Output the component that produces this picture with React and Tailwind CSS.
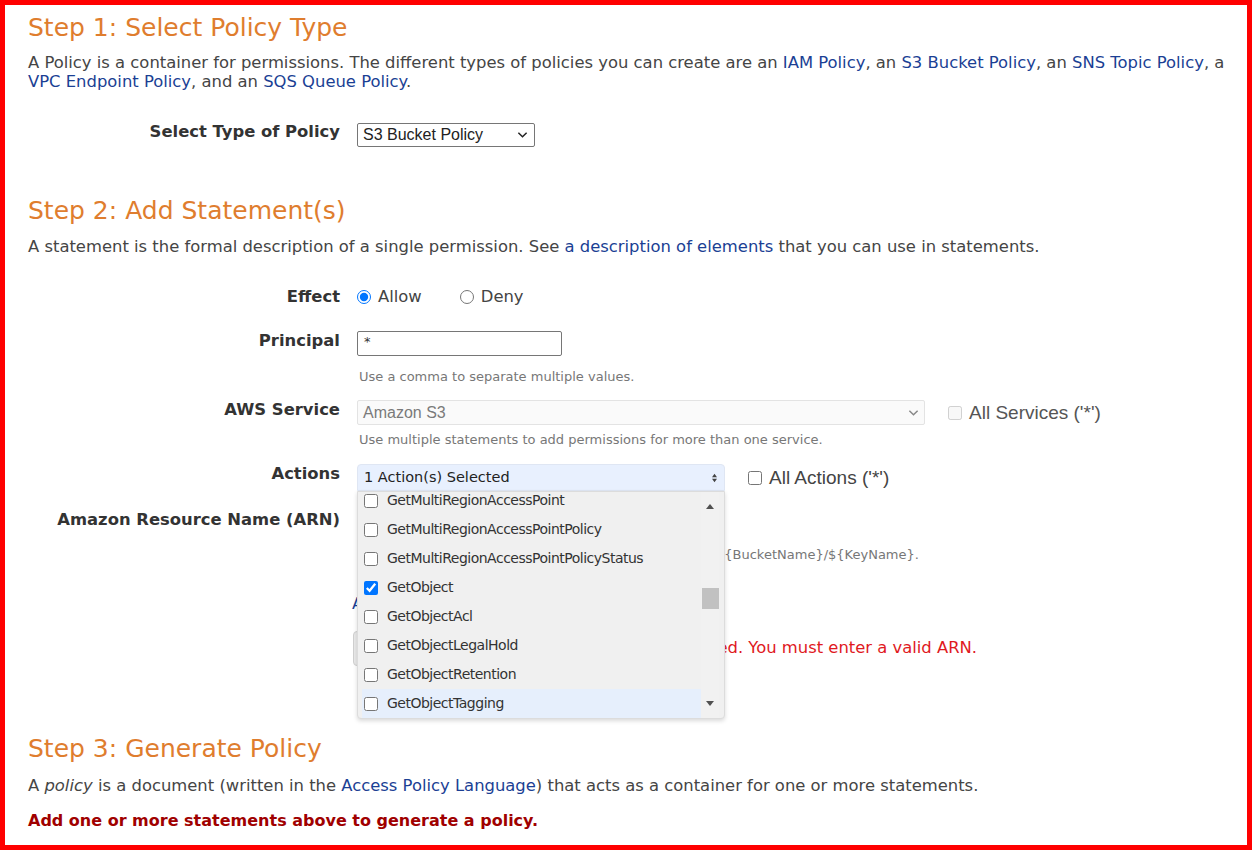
import React from "react";

const Chevron = ({ className }) => (
  <svg viewBox="0 0 12 8" className={className} fill="none" stroke="currentColor" strokeWidth="1.6">
    <path d="M1.5 1.5 L6 6 L10.5 1.5" />
  </svg>
);

const Row = ({ label, children, className = "" }) => (
  <div className={"flex items-start " + className}>
    <div className="w-[312px] shrink-0 text-right font-bold text-[16.4px] leading-[20px] text-[#333]">{label}</div>
    <div className="ml-[17px]">{children}</div>
  </div>
);

const actions = [
  { name: "GetMultiRegionAccessPoint" },
  { name: "GetMultiRegionAccessPointPolicy" },
  { name: "GetMultiRegionAccessPointPolicyStatus" },
  { name: "GetObject", checked: true },
  { name: "GetObjectAcl" },
  { name: "GetObjectLegalHold" },
  { name: "GetObjectRetention" },
  { name: "GetObjectTagging", hover: true },
];

const Link = ({ children }) => <span className="text-[#1b3f94]">{children}</span>;

const App = () => {
  return (
    <div className="w-[1252px] h-[850px] border-[5px] border-[#ff0000] bg-white overflow-hidden font-['DejaVu_Sans',sans-serif] text-[#454545]">
      <div className="pl-[23px] pr-[20px]">
        {/* Step 1 */}
        <h1 className="mt-[8px] text-[25px] leading-[30px] text-[#df7d2e]">Step 1: Select Policy Type</h1>
        <p className="mt-[10px] text-[16.4px] leading-[19px]">
          A Policy is a container for permissions. The different types of policies you can create are an{" "}
          <Link>IAM Policy</Link>, an <Link>S3 Bucket Policy</Link>, an <Link>SNS Topic Policy</Link>, a{" "}
          <Link>VPC Endpoint Policy</Link>, and an <Link>SQS Queue Policy</Link>.
        </p>

        <Row label="Select Type of Policy" className="mt-[31px]">
          <div className="w-[178px] h-[24px] mt-[1px] border border-[#767676] rounded-[2px] flex items-center justify-between pl-[5px] pr-[6px] font-['Liberation_Sans',sans-serif] text-[16px] text-[#222]">
            <span>S3 Bucket Policy</span>
            <Chevron className="w-[11px] h-[8px] text-[#222]" />
          </div>
        </Row>

        {/* Step 2 */}
        <h2 className="mt-[49px] text-[25px] leading-[30px] text-[#df7d2e]">Step 2: Add Statement(s)</h2>
        <p className="mt-[11px] text-[16.4px] leading-[19px]">
          A statement is the formal description of a single permission. See <Link>a description of elements</Link> that you can use in statements.
        </p>

        <Row label="Effect" className="mt-[31px]">
          <div className="flex items-center h-[20px] text-[16.4px] text-[#444]">
            <input type="radio" name="effect" defaultChecked className="w-[14px] h-[14px] m-0" />
            <span className="ml-[7px]">Allow</span>
            <input type="radio" name="effect" className="w-[14px] h-[14px] m-0 ml-[38px]" />
            <span className="ml-[7px]">Deny</span>
          </div>
        </Row>

        <Row label="Principal" className="mt-[24px]">
          <div className="w-[205px] h-[25px] border border-[#767676] rounded-[2px] pl-[6px] text-[13px] leading-[20px] text-[#333]">*</div>
          <div className="mt-[13px] ml-[2px] text-[13px] leading-[16px] text-[#777]">Use a comma to separate multiple values.</div>
        </Row>

        <Row label="AWS Service" className="mt-[15px]">
          <div className="flex items-center">
            <div className="w-[568px] h-[25px] border border-[#e3e3e3] rounded-[2px] bg-[#fafafa] flex items-center justify-between pl-[5px] pr-[5px] font-['Liberation_Sans',sans-serif] text-[16px] text-[#7a7a7a]">
              <span>Amazon S3</span>
              <Chevron className="w-[11px] h-[8px] text-[#888]" />
            </div>
            <input type="checkbox" disabled className="ml-[23px] w-[14px] h-[14px] m-0" />
            <span className="ml-[7px] font-['Liberation_Sans',sans-serif] text-[19px] leading-[22px] text-[#555]">All Services ('*')</span>
          </div>
          <div className="mt-[7px] ml-[2px] text-[13px] leading-[16px] text-[#777]">Use multiple statements to add permissions for more than one service.</div>
        </Row>

        <Row label="Actions" className="mt-[16px]">
          <div className="flex items-center">
            <div className="relative">
              <div className="w-[368px] h-[27px] rounded-t-[4px] bg-[#e8f0fe] border border-[#dfe6f3] flex items-center justify-between pl-[6px] pr-[6px] text-[14.5px] text-[#222]">
                <span>1 Action(s) Selected</span>
                <svg viewBox="0 0 8 12" className="w-[7px] h-[10px] text-[#444]" fill="currentColor">
                  <path d="M4 1 L7 5 H1 Z M4 11 L1 7 H7 Z" />
                </svg>
              </div>
              {/* open dropdown list */}
              <div className="absolute left-0 top-[27px] z-10 w-[368px] h-[228px] bg-[#f0f0f0] border border-[#dcdcdc] rounded-b-[4px] shadow-[0_2px_4px_rgba(0,0,0,0.15)] overflow-hidden flex">
                <div className="flex-1 pl-[4px] overflow-hidden">
                  <div className="mt-[-6px]">
                    {actions.map((a) => (
                      <div
                        key={a.name}
                        className={"h-[29px] flex items-center pl-[2px] " + (a.hover ? "bg-[#e6effc]" : "")}
                      >
                        <input type="checkbox" defaultChecked={a.checked} className="w-[14px] h-[14px] m-0" />
                        <span className="ml-[9px] text-[14px] tracking-[-0.5px] text-[#333]">{a.name}</span>
                      </div>
                    ))}
                  </div>
                </div>
                <div className="w-[18px] mr-[5px] bg-[#f1f1f1] flex flex-col items-center">
                  <svg viewBox="0 0 8 5" className="mt-[12px] w-[8px] h-[5px] text-[#505050]" fill="currentColor">
                    <path d="M4 0 L8 5 H0 Z" />
                  </svg>
                  <div className="mt-[79px] w-[17px] h-[21px] bg-[#c1c1c1]" />
                  <div className="flex-1" />
                  <svg viewBox="0 0 8 5" className="mb-[12px] w-[8px] h-[5px] text-[#505050]" fill="currentColor">
                    <path d="M4 5 L0 0 H8 Z" />
                  </svg>
                </div>
              </div>
            </div>
            <input type="checkbox" className="ml-[23px] w-[14px] h-[14px] m-0" />
            <span className="ml-[7px] font-['Liberation_Sans',sans-serif] text-[19px] leading-[22px] text-[#444]">All Actions ('*')</span>
          </div>
        </Row>

        <Row label="Amazon Resource Name (ARN)" className="mt-[19px]">
          <div className="w-[368px] h-[25px] border border-[#767676] rounded-[2px]" />
          <div className="mt-[12px] ml-[14px] text-[13px] leading-[16px] text-[#777]">
            ARN should follow the following format: arn:aws:s3:::${"{BucketName}"}/${"{KeyName}"}.
          </div>
          <div className="mt-[31px] ml-[-5px] text-[16.4px] leading-[20px] text-[#1b3f94]">Add Conditions (Optional)</div>
          <div className="mt-[17px] ml-[-4px] flex items-center">
            <div className="h-[35px] px-[14px] bg-[#e9e9e9] border border-[#d0d0d0] rounded-[4px] flex items-center text-[16px] text-[#333]">Add Statement</div>
            <span className="ml-[67px] text-[16.4px] text-[#e0191e]">ARN field is required. You must enter a valid ARN.</span>
          </div>
        </Row>

        {/* Step 3 */}
        <h2 className="mt-[68px] text-[25px] leading-[30px] text-[#df7d2e]">Step 3: Generate Policy</h2>
        <p className="mt-[12px] text-[16.4px] leading-[19px]">
          A <i>policy</i> is a document (written in the <Link>Access Policy Language</Link>) that acts as a container for one or more statements.
        </p>
        <p className="mt-[16px] text-[16px] leading-[19px] font-bold text-[#a00000]">Add one or more statements above to generate a policy.</p>
      </div>
    </div>
  );
};

export default App;
